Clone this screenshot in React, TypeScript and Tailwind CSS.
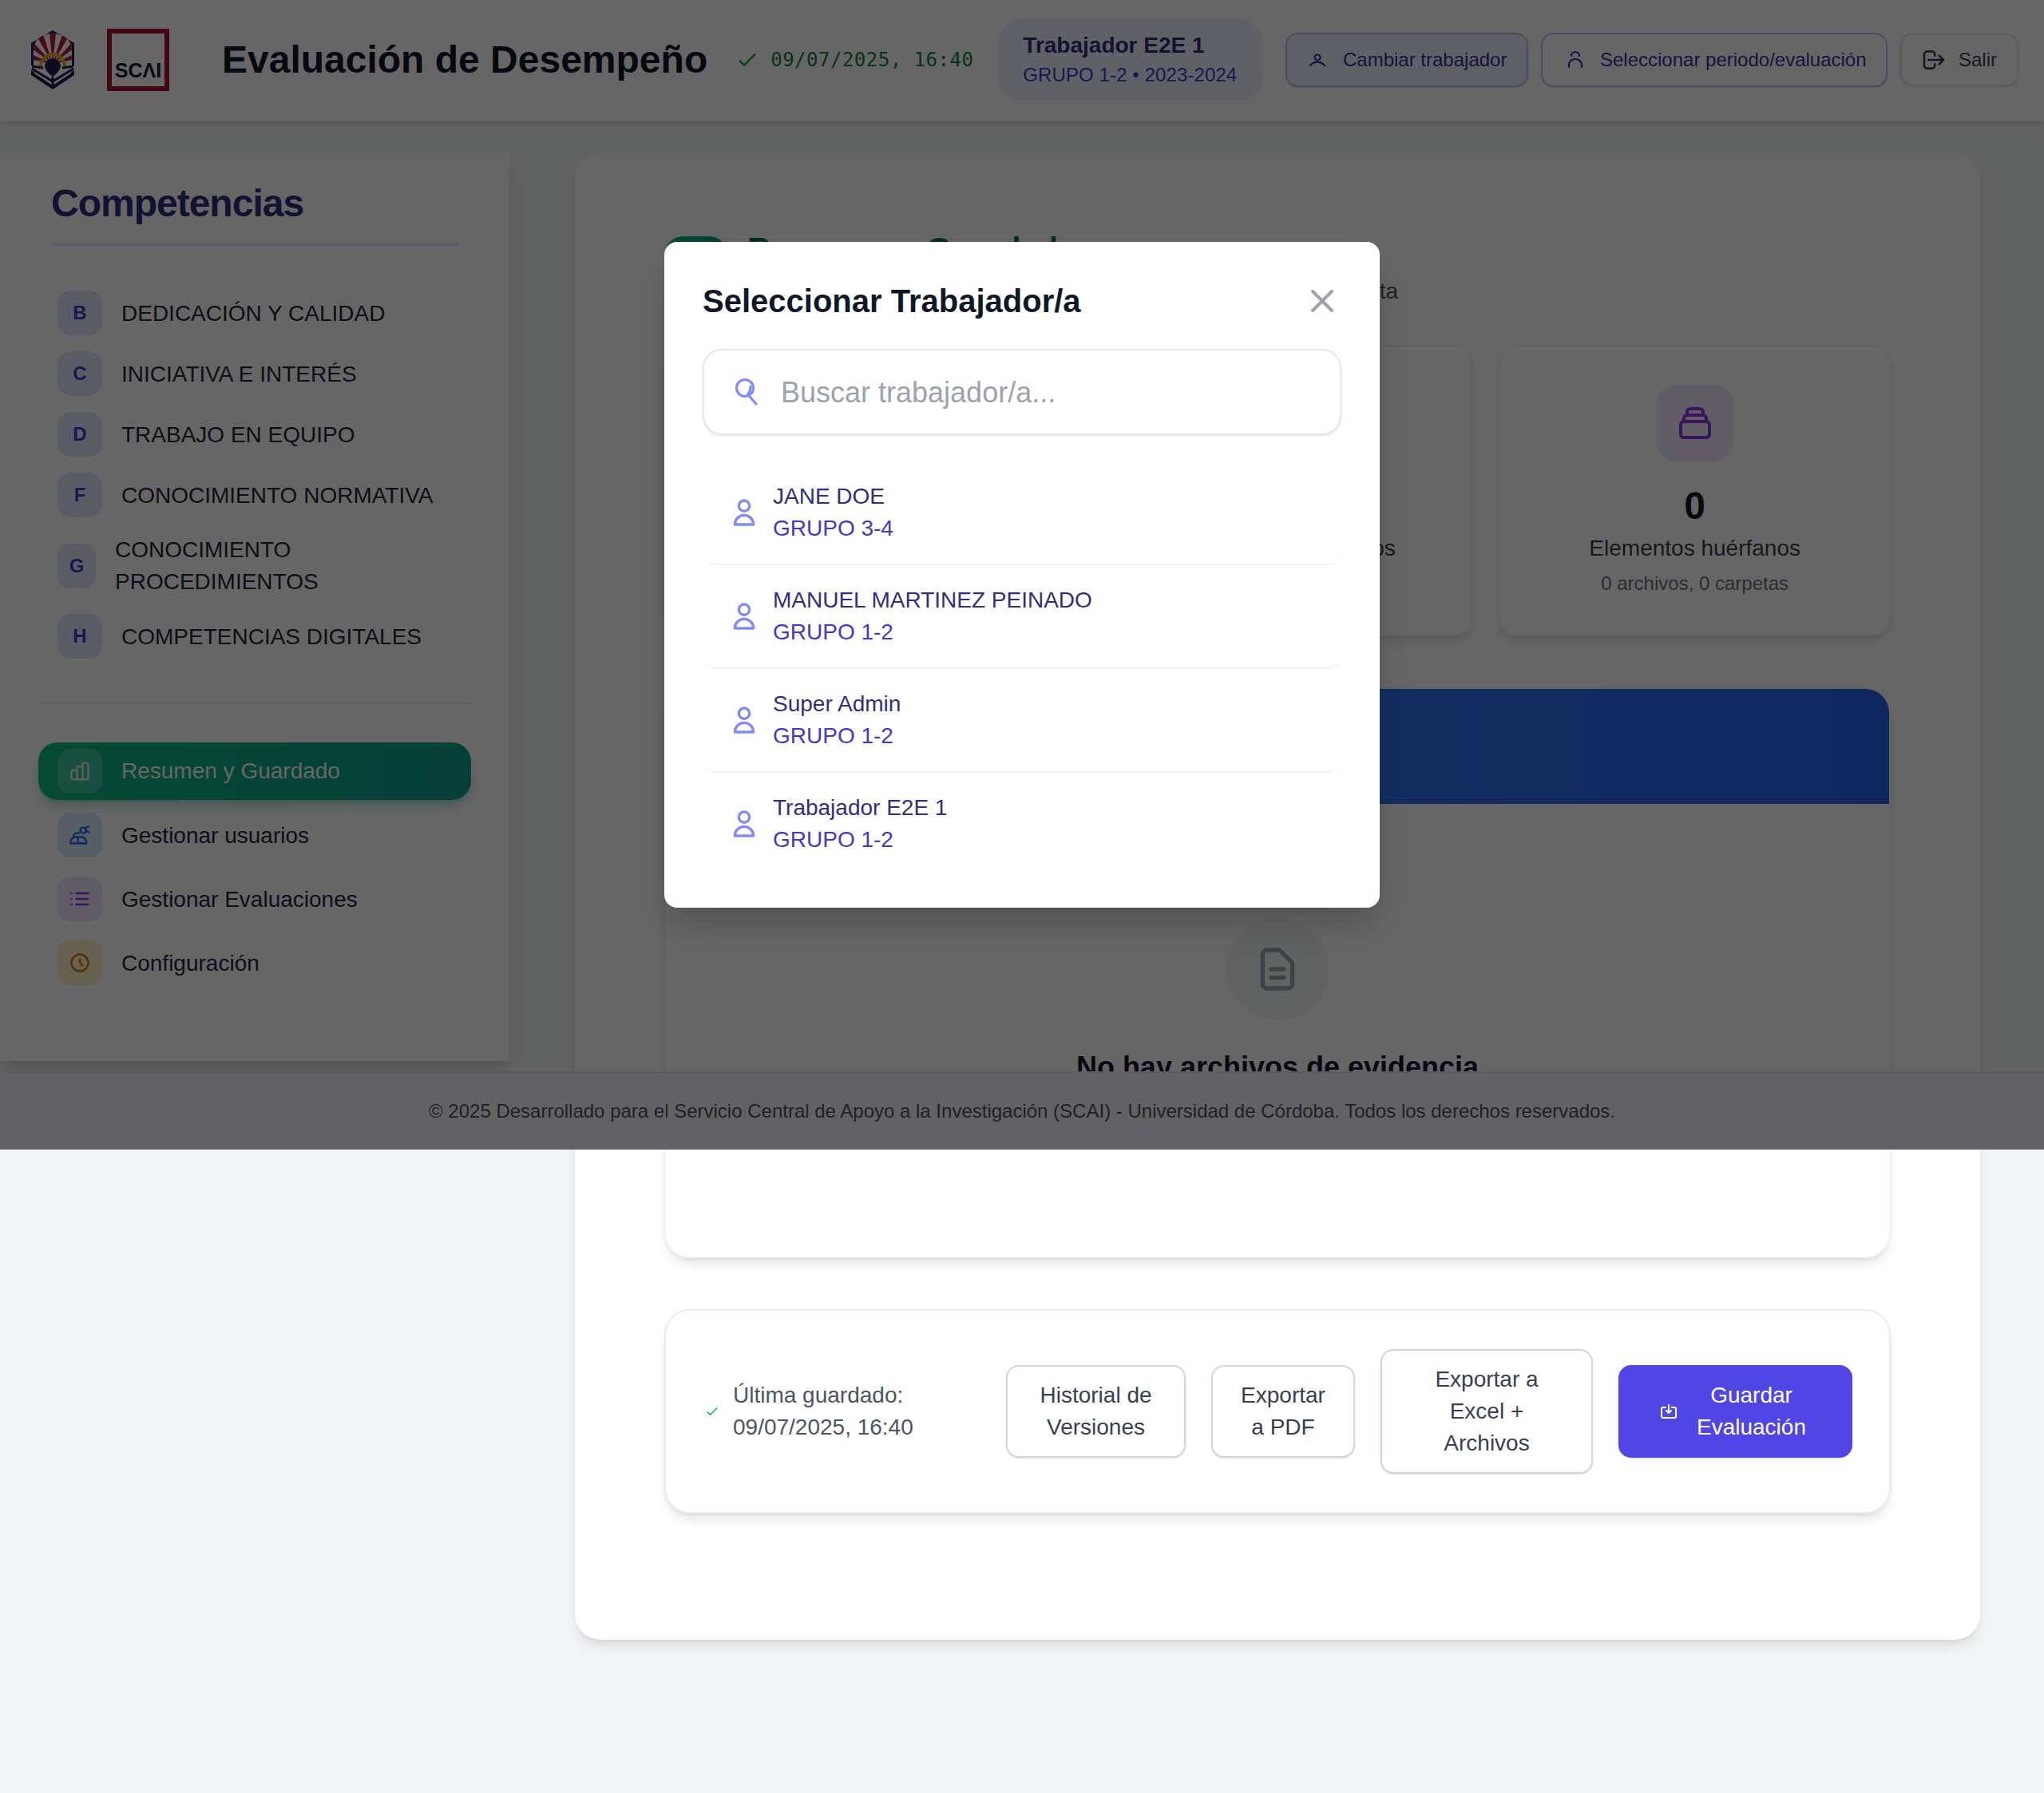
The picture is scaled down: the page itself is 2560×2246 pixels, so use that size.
import React from "react";

const FONT = { fontFamily: '"Liberation Sans", Arial, sans-serif' };

type IconProps = { d: string; className: string; sw?: number };

function Icon({ d, className, sw = 2 }: IconProps) {
  return (
    <svg viewBox="0 0 24 24" fill="none" stroke="currentColor" strokeWidth={sw} strokeLinecap="round" strokeLinejoin="round" className={className}>
      <path d={d} />
    </svg>
  );
}

const USER = "M16 7a4 4 0 11-8 0 4 4 0 018 0zM12 14a7 7 0 00-7 7h14a7 7 0 00-7-7z";
const LOGOUT = "M17 16l4-4m0 0l-4-4m4 4H7m6 4v1a3 3 0 01-3 3H6a3 3 0 01-3-3V7a3 3 0 013-3h4a3 3 0 013 3v1";
const CHART = "M9 19v-6a2 2 0 00-2-2H5a2 2 0 00-2 2v6a2 2 0 002 2h2a2 2 0 002-2zm0 0V9a2 2 0 012-2h2a2 2 0 012 2v10m-6 0a2 2 0 002 2h2a2 2 0 002-2m0 0V5a2 2 0 012-2h2a2 2 0 012 2v14a2 2 0 01-2 2h-2a2 2 0 01-2-2z";
const USERS = "M2 21v-1a6 6 0 016-6h5a6 6 0 016 6v1zM10 14v7M5 14a4.500 4.500 0 016-4M15.500 10a3 3 0 100-6 3 3 0 000 6zM19 4l2.500-1.500M19 7.500l2.500 1.500";
const LIST = "M8 6h13M8 12h13M8 18h13M3 6h.01M3 12h.01M3 18h.01";
const CLOCK = "M12 8v4l3 3m6-3a9 9 0 11-18 0 9 9 0 0118 0z";
const COLLECTION = "M19 11H5m14 0a2 2 0 012 2v6a2 2 0 01-2 2H5a2 2 0 01-2-2v-6a2 2 0 012-2m14 0V9a2 2 0 00-2-2M5 11V9a2 2 0 012-2m0 0V5a2 2 0 012-2h6a2 2 0 012 2v2M7 7h10";
const DOC = "M9 12h6m-6 4h6m2 5H7a2 2 0 01-2-2V5a2 2 0 012-2h5.586a1 1 0 01.707.293l5.414 5.414a1 1 0 01.293.707V19a2 2 0 01-2 2z";
const CHECK = "M5 13l4 4L19 7";
const SAVE = "M8 7H5a2 2 0 00-2 2v9a2 2 0 002 2h14a2 2 0 002-2V9a2 2 0 00-2-2h-3m-1 4l-3 3m0 0l-3-3m3 3V4";
const CLOSE = "M6 18L18 6M6 6l12 12";

const competencias = [
  { letter: "B", label: "DEDICACIÓN Y CALIDAD" },
  { letter: "C", label: "INICIATIVA E INTERÉS" },
  { letter: "D", label: "TRABAJO EN EQUIPO" },
  { letter: "F", label: "CONOCIMIENTO NORMATIVA" },
  { letter: "G", label: "CONOCIMIENTO PROCEDIMIENTOS" },
  { letter: "H", label: "COMPETENCIAS DIGITALES" },
];

const trabajadores = [
  { name: "JANE DOE", group: "GRUPO 3-4" },
  { name: "MANUEL MARTINEZ PEINADO", group: "GRUPO 1-2" },
  { name: "Super Admin", group: "GRUPO 1-2" },
  { name: "Trabajador E2E 1", group: "GRUPO 1-2" },
];

// rayos rojos del escudo
const rays = [-162, -138, -114, -90, -66, -42, -18].map((deg) => {
  const a = ((deg - 6) * Math.PI) / 180;
  const b = ((deg + 6) * Math.PI) / 180;
  return `M30 44 L${30 + 44 * Math.cos(a)} ${44 + 44 * Math.sin(a)} L${30 + 44 * Math.cos(b)} ${44 + 44 * Math.sin(b)} Z`;
});

function UcoLogo() {
  return (
    <svg viewBox="0 0 60 78" className="w-[60px] h-[78px] shrink-0">
      <defs>
        <clipPath id="uco-dome">
          <path d="M6 46 V26 Q8 7 30 6 Q52 7 54 26 V46 Z" />
        </clipPath>
      </defs>
      <path d="M30 2 L57 18 V58 L30 76 L3 58 V18 Z" fill="#1e1b4b" />
      <path d="M7 50 L30 64 L53 50 V56 L30 71 L7 56 Z" fill="#fff" />
      <path d="M6 46 V26 Q8 7 30 6 Q52 7 54 26 V46 Z" fill="#fff" />
      <g clipPath="url(#uco-dome)" fill="#b91c3c">
        {rays.map((d) => (
          <path key={d} d={d} />
        ))}
      </g>
      <path d="M3 46 L30 46 L57 46 V52 L30 66 L3 52 Z" fill="#fff" />
      <path d="M4 47 L18 49 M56 47 L42 49 M30 60 L30 72 M4 50 L30 66 L56 50" stroke="#1e1b4b" strokeWidth="3" fill="none" />
      <path d="M15 47 A15 15 0 0 1 45 47" fill="none" stroke="#eab308" strokeWidth="4" />
      <path d="M20 47 A10 10 0 0 1 40 47 Q38 55 30 60 Q22 55 20 47 Z" fill="#1e1b4b" />
    </svg>
  );
}

function Header() {
  return (
    <header className="h-[152px] bg-white shadow-md flex items-center pl-9 pr-8 pb-[3px]">
      <UcoLogo />
      <div className="ml-[38px] w-[78px] h-[78px] shrink-0 border-[6px] border-[#a8132b] flex items-end justify-center pb-1">
        <span className="text-[25px] leading-8 font-bold text-gray-900">SCΛI</span>
      </div>
      <h1 className="ml-[66px] text-[48px] leading-[64px] font-bold text-gray-900 whitespace-nowrap">Evaluación de Desempeño</h1>
      <Icon d={CHECK} className="ml-[34px] w-8 h-8 text-[#16a34a]" />
      <span className="ml-[13px] text-[24px] leading-8 tracking-[0.5px] text-[#15803d] whitespace-nowrap" style={{ fontFamily: '"DejaVu Sans Mono", monospace' }}>
        09/07/2025, 16:40
      </span>
      <div className="ml-[31px] w-[332px] h-[104px] rounded-[32px] bg-[#eef2ff] pl-[31px] pb-[2px] flex flex-col justify-center">
        <div className="-mt-px text-[28px] leading-10 font-bold text-[#312e81] whitespace-nowrap">Trabajador E2E 1</div>
        <div className="mt-px text-[24px] leading-8 tracking-[0.1px] text-[#4338ca] whitespace-nowrap">GRUPO 1-2 • 2023-2024</div>
      </div>
      <div className="ml-auto flex items-center gap-4">
        <button className="h-[68px] w-[304px] rounded-2xl border-2 border-[#b4c0fd] bg-[#eef2ff] shadow-sm flex items-center pl-7 gap-[22px] text-[24px] text-[#3730a3] whitespace-nowrap">
          <svg viewBox="0 0 20 16" fill="none" stroke="currentColor" strokeWidth="2.2" strokeLinecap="round" className="w-[20px] h-[16px]">
            <circle cx="10" cy="5" r="3.500" />
            <path d="M1 15 Q5 10.500 10 11 Q15 10.500 19 15" />
          </svg>
          Cambiar trabajador
        </button>
        <button className="h-[68px] w-[434px] rounded-2xl border-2 border-[#b4c0fd] bg-white shadow-sm flex items-center pl-[31px] gap-[21px] text-[24px] text-[#3730a3] whitespace-nowrap">
          <svg viewBox="0 0 20 24" fill="none" stroke="currentColor" strokeWidth="2.2" strokeLinecap="round" className="w-[20px] h-[24px]">
            <path d="M5 7 A5 5 0 0 1 15 7" />
            <path d="M2 21 V18 A8 7 0 0 1 18 18 V21" />
          </svg>
          Seleccionar periodo/evaluación
        </button>
        <button className="h-[66px] w-[148px] rounded-2xl border-2 border-gray-200 bg-white shadow-sm flex items-center pl-6 gap-[15px] text-[24px] text-gray-700">
          <Icon d={LOGOUT} className="w-8 h-8" />
          Salir
        </button>
      </div>
    </header>
  );
}

function Sidebar() {
  const tools = [
    { label: "Gestionar usuarios", d: USERS, box: "bg-[#dbeafe]", color: "text-[#2563eb]" },
    { label: "Gestionar Evaluaciones", d: LIST, box: "bg-[#f3e8ff]", color: "text-[#9333ea]" },
    { label: "Configuración", d: CLOCK, box: "bg-[#fef3c7]", color: "text-[#d97706]" },
  ];
  return (
    <aside className="w-[638px] shrink-0 self-start bg-white shadow-xl pt-[31px] pb-[87px] px-12">
      <h2 className="mx-4 text-[48px] leading-[64px] font-bold tracking-[-1px] text-[#312e81]">Competencias</h2>
      <div className="mx-4 mt-[17px] h-1 bg-[#e0e7ff]" />
      <nav className="mt-12 flex flex-col gap-1">
        {competencias.map((c) => (
          <div key={c.letter} className="flex items-center gap-6 px-6 py-2">
            <span className={c.letter === "G" ? "w-12 h-14 shrink-0 rounded-2xl bg-[#e0e7ff] flex items-center justify-center text-[24px] font-bold text-[#4338ca]" : "w-14 h-14 shrink-0 rounded-2xl bg-[#e0e7ff] flex items-center justify-center text-[24px] font-bold text-[#4338ca]"}>
              {c.letter}
            </span>
            <span className="pt-px text-[28px] leading-10 text-[#1f2937]">{c.label}</span>
          </div>
        ))}
      </nav>
      <div className="mt-[47px] h-0.5 bg-gray-200" />
      <div className="mt-12 flex flex-col gap-2">
        <div className="h-[72px] rounded-3xl bg-gradient-to-r from-[#10b981] to-[#0f9f8c] shadow-lg shadow-[#059669]/30 flex items-center gap-6 px-6">
          <span className="w-14 h-14 rounded-2xl bg-white/20 flex items-center justify-center">
            <Icon d={CHART} className="w-7 h-7 text-white/80" />
          </span>
          <span className="text-[28px] text-white">Resumen y Guardado</span>
        </div>
        {tools.map((t) => (
          <div key={t.label} className="h-[72px] flex items-center gap-6 px-6">
            <span className={`w-14 h-14 rounded-2xl flex items-center justify-center ${t.box}`}>
              <Icon d={t.d} className={`w-7 h-7 ${t.color}`} />
            </span>
            <span className="pt-0.5 text-[28px] text-[#1f2937]">{t.label}</span>
          </div>
        ))}
      </div>
    </aside>
  );
}

function StatCard({ d, value, label, sub }: { d?: string; value?: string; label?: string; sub?: string }) {
  return (
    <div className="h-[365px] rounded-3xl border-2 border-gray-100 bg-white shadow-lg pt-12 flex flex-col items-center">
      {d && (
        <span className="w-24 h-24 rounded-3xl bg-[#f3e8ff] flex items-center justify-center">
          <Icon d={d} className="w-12 h-12 text-[#9333ea]" />
        </span>
      )}
      {value && <div className="mt-6 text-[48px] leading-[64px] font-bold text-gray-900">{value}</div>}
      {label && <div className={value ? "mt-px text-[28px] leading-10 text-gray-700" : "mt-[185px] text-[28px] leading-10 text-gray-700"}>{label}</div>}
      {sub && <div className="mt-2 text-[24px] leading-8 text-gray-500">{sub}</div>}
    </div>
  );
}

function ActionBar() {
  return (
    <div className="mt-16 h-[256px] rounded-[32px] border-2 border-[#eaecf0] bg-white shadow-lg flex items-center pl-12 pr-[46px]">
      <Icon d={CHECK} className="w-5 h-5 text-[#22c55e] shrink-0" />
      <div className="ml-4 text-[28px] leading-10 text-[#4b5563]">
        <div>Última guardado:</div>
        <div>09/07/2025, 16:40</div>
      </div>
      <div className="ml-auto flex items-center gap-8 text-[28px] leading-10 text-[#374151] text-center">
        <button className="w-[225px] h-[116px] rounded-2xl border-2 border-gray-300 bg-white shadow-sm">
          Historial de<br />Versiones
        </button>
        <button className="w-[180px] h-[116px] rounded-2xl border-2 border-gray-300 bg-white shadow-sm">
          Exportar<br />a PDF
        </button>
        <button className="w-[266px] h-[156px] rounded-2xl border-2 border-gray-300 bg-white shadow-sm">
          Exportar a<br />Excel +<br />Archivos
        </button>
        <button className="w-[293px] h-[116px] rounded-2xl bg-[#4f46e5] text-white shadow-sm flex items-center pl-[51px] pr-[35px]">
          <Icon d={SAVE} className="w-6 h-6 shrink-0" />
          <span className="flex-1 text-center">Guardar<br />Evaluación</span>
        </button>
      </div>
    </div>
  );
}

function MainCard() {
  return (
    <main className="ml-[82px] w-[1760px] rounded-[32px] bg-white shadow-lg pt-[92px] pb-[158px] pl-[112px] pr-[112px]">
      <div className="flex gap-6">
        <div className="mt-3 w-20 h-20 rounded-3xl bg-gradient-to-r from-[#10b981] to-[#0f9f8c]" />
        <div>
          <h2 className="text-[40px] leading-[56px] font-bold text-[#047857] whitespace-nowrap">Resumen y Guardado</h2>
          <p className="mt-[5px] text-[28px] leading-10 text-[#4b5563] whitespace-nowrap">Vista general de la evaluación y los archivos de evidencia de esta</p>
        </div>
      </div>
      <div className="mt-[47px] grid grid-cols-3 gap-8">
        <StatCard />
        <StatCard label="Carpetas y documentos" />
        <StatCard d={COLLECTION} value="0" label="Elementos huérfanos" sub="0 archivos, 0 carpetas" />
      </div>
      <section className="mt-16 h-[715px] rounded-[32px] border-2 border-gray-100 bg-white shadow-lg overflow-hidden">
        <div className="h-[144px] bg-gradient-to-r from-[#3b82f6] to-[#2563eb]" />
        <div className="mt-[143px] flex flex-col items-center">
          <span className="w-32 h-32 rounded-full bg-gray-100 flex items-center justify-center">
            <Icon d={DOC} className="w-16 h-16 text-[#9ca3af]" />
          </span>
          <h3 className="mt-[31px] text-[36px] leading-[56px] font-bold text-gray-900">No hay archivos de evidencia</h3>
        </div>
      </section>
      <ActionBar />
    </main>
  );
}

function WorkerModal() {
  return (
    <div className="absolute top-0 left-0 w-full h-[1440px] bg-black/60 flex items-center justify-center">
      <div className="w-[896px] rounded-2xl bg-white shadow-2xl pt-[46px] pb-[41px] px-12">
        <div className="flex items-center justify-between">
          <h2 className="text-[40px] leading-[56px] font-bold text-gray-900">Seleccionar Trabajador/a</h2>
          <Icon d={CLOSE} className="w-12 h-12 text-[#9ca3af]" />
        </div>
        <div className="mt-8 h-[108px] rounded-3xl border-2 border-gray-200 shadow-sm flex items-center pl-[38px] gap-7">
          <svg viewBox="0 0 30 36" fill="none" stroke="currentColor" strokeWidth="3.200" strokeLinecap="round" strokeLinejoin="round" className="w-[30px] h-[36px] text-[#818cf8]">
            <circle cx="13" cy="13" r="10.500" />
            <path d="M20 11 Q20 17 16.500 21 L27 33" />
          </svg>
          <span className="pt-0.5 text-[36px] text-[#9ca3af]">Buscar trabajador/a...</span>
        </div>
        <ul className="mt-[33px]">
          {trabajadores.map((t, i) => (
            <li key={t.name} className={i < 3 ? "flex items-center gap-4 px-8 py-6 rounded-2xl border-b-2 border-gray-100" : "flex items-center gap-4 px-8 py-6"}>
              <Icon d={USER} className="w-10 h-10 text-[#818cf8]" />
              <div className="text-[28px] leading-10">
                <div className="text-[#312e81]">{t.name}</div>
                <div className="text-[#4338ca]">{t.group}</div>
              </div>
            </li>
          ))}
        </ul>
      </div>
    </div>
  );
}

export default function App() {
  return (
    <div className="relative min-h-[2246px] bg-[#f3f4f6]" style={FONT}>
      <Header />
      <div className="mt-10 flex items-start">
        <Sidebar />
        <MainCard />
      </div>
      <footer className="absolute top-[1342px] left-0 w-full h-[98px] bg-[#f4f6fc] border-t-2 border-gray-200 flex items-center justify-center text-[24px] text-[#4b5563]">
        © 2025 Desarrollado para el Servicio Central de Apoyo a la Investigación (SCAI) - Universidad de Córdoba. Todos los derechos reservados.
      </footer>
      <WorkerModal />
    </div>
  );
}
